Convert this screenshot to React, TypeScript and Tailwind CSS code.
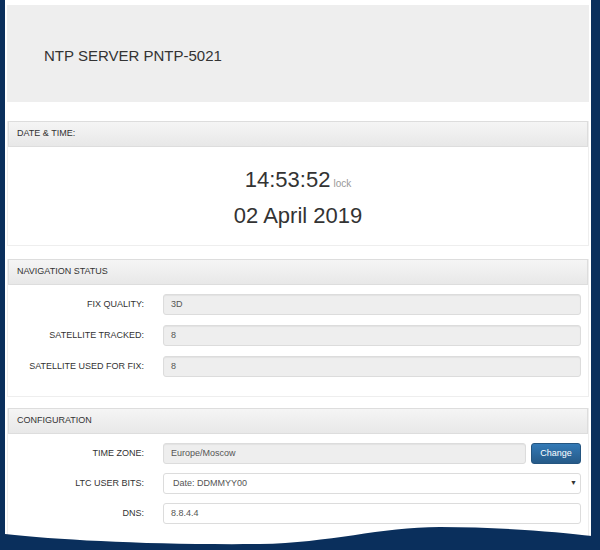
const font = { fontFamily: '"Liberation Sans", Arial, sans-serif' };

function PanelHeading({ title }: { title: string }) {
  return (
    <div className="h-[26px] flex items-center px-[8px] border border-[#dddddd] bg-gradient-to-b from-[#f5f5f5] to-[#e8e8e8] text-[9px] text-[#333333] uppercase">
      {title}
    </div>
  );
}

function Row({ label, children }: { label: string; children: React.ReactNode }) {
  return (
    <div className="flex items-center h-[21px]">
      <div className="w-[136px] text-right text-[9px] text-[#333333]">{label}</div>
      <div className="flex-1 flex ml-[19px] mr-[7px] h-full">{children}</div>
    </div>
  );
}

function ReadOnly({ value }: { value: string }) {
  return (
    <div className="flex-1 h-full flex items-center pl-[7px] bg-[#eeeeee] border border-[#dcdcdc] rounded-[3px] text-[9px] text-[#555555] shadow-[inset_0_1px_1px_rgba(0,0,0,0.05)]">
      {value}
    </div>
  );
}

export default function App() {
  return (
    <div className="relative w-[600px] h-[550px] overflow-hidden bg-[#0a2f5c]" style={font}>
      <div className="ml-[5px] w-[586px] h-[550px] bg-white px-[2px] pt-[5px]">
        <div className="h-[97px] bg-[#eeeeee] flex items-center pl-[37px] pt-[6px]">
          <span className="text-[15px] text-[#333333]">NTP SERVER PNTP-5021</span>
        </div>

        <div className="mt-[19px] border-b border-x border-[#eeeeee]">
          <PanelHeading title="Date & Time:" />
          <div className="h-[98px] flex flex-col items-center pt-[22px] text-[#333333]">
            <div className="flex items-baseline h-[36px] leading-[22px]">
              <span className="text-[22px]">14:53:52</span>
              <span className="text-[10px] text-[#999999] ml-[3px]">lock</span>
            </div>
            <div className="text-[22px] leading-[22px]">02 April 2019</div>
          </div>
        </div>

        <div className="mt-[13px] border-b border-x border-[#eeeeee]">
          <PanelHeading title="Navigation Status" />
          <div className="flex flex-col gap-[10px] pt-[9px] pb-[19px]">
            <Row label="FIX QUALITY:">
              <ReadOnly value="3D" />
            </Row>
            <Row label="SATELLITE TRACKED:">
              <ReadOnly value="8" />
            </Row>
            <Row label="SATELLITE USED FOR FIX:">
              <ReadOnly value="8" />
            </Row>
          </div>
        </div>

        <div className="mt-[11px] border-x border-[#eeeeee]">
          <PanelHeading title="Configuration" />
          <div className="flex flex-col gap-[9px] pt-[9px] pb-[19px]">
            <Row label="TIME ZONE:">
              <ReadOnly value="Europe/Moscow" />
              <button className="ml-[5px] w-[50px] h-full rounded-[3px] border border-[#245580] bg-gradient-to-b from-[#337ab7] to-[#265a88] text-white text-[9px]">
                Change
              </button>
            </Row>
            <Row label="LTC USER BITS:">
              <div className="flex-1 h-full flex items-center justify-between pl-[9px] pr-[3px] bg-white border border-[#dcdcdc] rounded-[3px] text-[9px] text-[#555555]">
                <span>Date: DDMMYY00</span>
                <span className="text-[7px] text-[#333333]">▼</span>
              </div>
            </Row>
            <Row label="DNS:">
              <div className="flex-1 h-full flex items-center pl-[7px] bg-white border border-[#dcdcdc] rounded-[3px] text-[9px] text-[#555555]">
                8.8.4.4
              </div>
            </Row>
          </div>
        </div>
      </div>

      <svg className="absolute left-0 bottom-0" width="600" height="30" viewBox="0 520 600 30">
        <path
          d="M0 520 L5 520 L5 534 C60 540 150 545 260 544 C330 543 380 527 440 527 C500 527 560 532 592 536 L592 520 L600 520 L600 550 L0 550 Z"
          fill="#0a2f5c"
        />
      </svg>
    </div>
  );
}
